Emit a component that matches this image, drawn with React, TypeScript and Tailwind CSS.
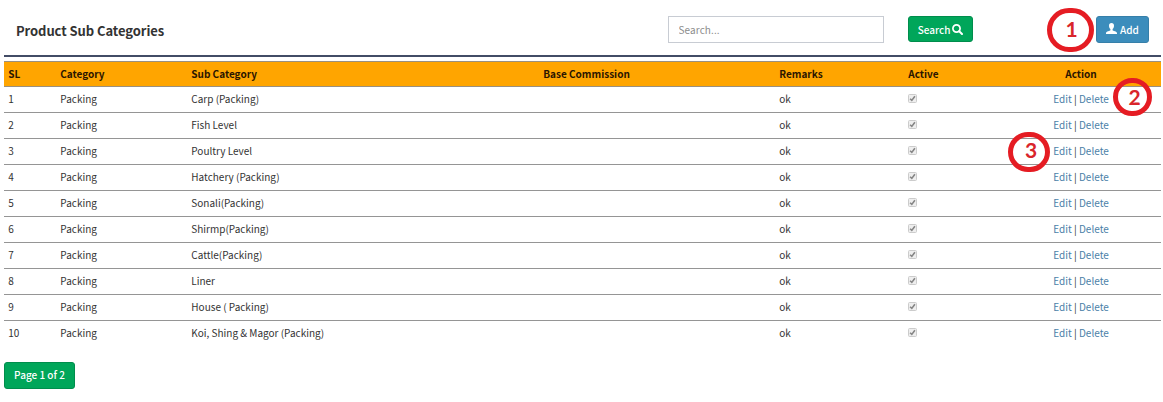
import React from 'react';

const names = [
  'Carp (Packing)',
  'Fish Level',
  'Poultry Level',
  'Hatchery (Packing)',
  'Sonali(Packing)',
  'Shirmp(Packing)',
  'Cattle(Packing)',
  'Liner',
  'House ( Packing)',
  'Koi, Shing & Magor (Packing)',
];

const columns = 'grid grid-cols-[52px_131px_352px_236px_129px_144px_1fr] pl-[4.3px] pr-1 pb-0.5';

function CheckedBox() {
  return (
    <svg width="9" height="9" viewBox="0 0 9 9" className="block" role="img" aria-label="Active">
      <rect x="0.5" y="0.5" width="8" height="8" rx="1" fill="#eeeeee" stroke="#cccccc" />
      <path d="M2.1 4.7 3.8 6.4 6.9 2.2" fill="none" stroke="#858585" strokeWidth="1.6" />
    </svg>
  );
}

function Marker({ value, className }: { value: string; className: string }) {
  return (
    <div
      className={`absolute flex items-center justify-center rounded-full border-5 border-[#e51c23] font-['Lato',sans-serif] font-bold text-[#d9252b] ${className}`}
    >
      {value}
    </div>
  );
}

export default function App() {
  return (
    <div className="relative h-[402px] w-[1163px] overflow-hidden bg-white pl-1 pr-0.5 font-['Noto_Sans_CJK_SC',sans-serif] text-[10px] text-[#333]">
      <header className="flex h-[57px] border-b-2 border-[#424c66]">
        <h1 className="ml-3 mt-[21px] w-[652px] text-[13px] font-bold leading-5 tracking-[-0.07px]">
          <span>Product Sub Categories</span>
        </h1>
        <input
          className="mt-4 h-[27px] w-[216px] border border-[#c8ccd3] px-[9.5px] leading-4 tracking-[0.1px] outline-none placeholder:text-[#8c8c8c]"
          placeholder="Search..."
        />
        <button className="ml-6 mt-4 flex h-[26px] w-[65px] items-center justify-center gap-0.5 rounded-[3px] border border-[#008d4c] bg-[#00a65a] font-medium text-white">
          <span>Search</span>
          <svg width="11" height="11" viewBox="0 0 11 11" fill="none" stroke="white">
            <circle cx="4.5" cy="4.5" r="3.6" strokeWidth="1.7" />
            <path d="m7.2 7.2 2.8 2.8" strokeWidth="2" strokeLinecap="round" />
          </svg>
        </button>
        <button className="ml-[123px] mt-4 flex h-[27px] w-[53px] items-center justify-center gap-[3px] rounded-[3px] border border-[#367fa9] bg-[#3c8dbc] font-medium text-white">
          <svg width="11" height="11" viewBox="0 0 11 11" className="mb-[3px]" fill="white">
            <path d="M5.5 0C3.8 0 3 1.1 3 2.7c0 1.5.6 2.7 1.4 3.4v1.1C4.2 8 0 8.2 0 10v1h11v-1C11 8.2 6.8 8 6.6 7.2V6.1C7.4 5.4 8 4.2 8 2.7 8 1.1 7.2 0 5.5 0Z" />
          </svg>
          <span>Add</span>
        </button>
      </header>

      <div className="mt-1">
        <div className={`${columns} h-[26px] items-center border-y border-[#999080] bg-[#ffa500] font-bold text-[#2b1500]`}>
          <span>SL</span>
          <span>Category</span>
          <span>Sub Category</span>
          <span>Base Commission</span>
          <span>Remarks</span>
          <span>Active</span>
          <span className="pl-[13px]">Action</span>
        </div>
        {names.map((name, i) => (
          <div key={name} className={`${columns} h-[26px] items-center border-b border-[#959595] last:border-transparent`}>
            <span>{i + 1}</span>
            <span>Packing</span>
            <span>{name}</span>
            <span />
            <span>ok</span>
            <CheckedBox />
            <span className="whitespace-pre pl-[1px]">
              <a className="text-[#4b7fa8]">Edit</a> | <a className="text-[#4b7fa8]">Delete</a>
            </span>
          </div>
        ))}
      </div>

      <button className="mt-[15px] flex h-[27px] w-[71px] items-center justify-center rounded-[3px] border border-[#008d4c] bg-[#00a65a] pb-0.5 font-medium text-white">
        Page 1 of 2
      </button>

      <Marker value="1" className="left-[1047px] top-2 h-11 w-[47px] pb-0.5 pl-0.5 text-[21px]" />
      <Marker value="2" className="left-[1113px] top-[78px] h-[38px] w-[39px] pl-1 text-[21px]" />
      <Marker value="3" className="left-[1008px] top-[132px] h-10 w-[42px] pb-1 pl-1 text-[21px]" />
    </div>
  );
}
